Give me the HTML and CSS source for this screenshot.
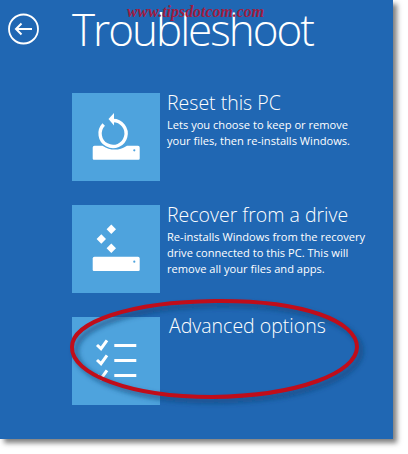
FILE: index.html
```html
<!DOCTYPE html>
<html lang="en">
<head>
<meta charset="utf-8">
<title>Troubleshoot</title>
<link rel="stylesheet" href="styles.css">
</head>
<body>
<main class="panel">
  <header class="top">
    <svg class="back" viewBox="0 0 32 32" aria-hidden="true">
      <circle cx="15.500" cy="16" r="14.500" fill="none" stroke="#fff" stroke-width="1.800"/>
      <path d="M24 16H8.500M13.500 10.500 8 16l5.500 5.500" fill="none" stroke="#fff" stroke-width="2"/>
    </svg>
    <h1 class="title">Troubleshoot</h1>
  </header>
  <section class="option">
    <div class="tile">
      <svg class="icon" viewBox="0 0 88 88" aria-hidden="true">
        <path d="M20.700 54.500Q20.700 52.700 22.500 52.700H30.500Q42.700 60.500 55 52.700H66Q67.700 52.700 67.700 54.500V65.500Q67.700 66.700 66.500 66.700H21.900Q20.700 66.700 20.700 65.500Z" fill="#fff"/>
        <circle cx="62.300" cy="57.300" r="1.100" fill="#4ea3dd"/>
        <path d="M41 27.500A13 13 0 1 1 31.700 31.500" fill="none" stroke="#fff" stroke-width="3.400"/>
        <path d="M42 20V32.500L36.500 26Z" fill="#fff"/>
      </svg>
    </div>
    <div class="copy">
      <h2 class="name">Reset this PC</h2>
      <p class="desc">Lets you choose to keep or remove your files, then re-installs Windows.</p>
    </div>
  </section>
  <section class="option">
    <div class="tile">
      <svg class="icon" viewBox="0 0 88 88" aria-hidden="true">
        <path d="M34.600 24.300 39.300 19.600 44 24.300 39.300 29ZM24.600 34 29.300 29.300 34 34 29.300 38.700ZM34.600 43.300 39.300 38.600 44 43.300 39.300 48Z" fill="#fff"/>
        <path d="M20.700 53.500Q20.700 51.700 22.500 51.700H66Q67.700 51.700 67.700 53.500V64.800Q67.700 66 66.500 66H21.900Q20.700 66 20.700 64.800Z" fill="#fff"/>
        <circle cx="62.300" cy="56.700" r="1.100" fill="#4ea3dd"/>
      </svg>
    </div>
    <div class="copy">
      <h2 class="name">Recover from a drive</h2>
      <p class="desc">Re-installs Windows from the recovery drive connected to this PC. This will remove all your files and apps.</p>
    </div>
  </section>
  <section class="option">
    <div class="tile">
      <svg class="icon" viewBox="0 0 88 88" aria-hidden="true">
        <path d="M25 28 29 31.700 35 23.300M25 43 29 46.700 35 38.300M25 58 29 61.700 35 53.300" fill="none" stroke="#fff" stroke-width="3"/>
        <path d="M42.300 28.500H64.300M42.300 43.500H64.300M42.300 58.500H64.300" fill="none" stroke="#fff" stroke-width="2.800"/>
      </svg>
    </div>
    <div class="copy copy-last">
      <h2 class="name">Advanced options</h2>
    </div>
  </section>
  <p class="watermark">www.tipsdotcom.com</p>
  <svg class="ring" viewBox="0 0 408 454" aria-hidden="true">
    <defs>
      <filter id="soft" x="-10%" y="-20%" width="120%" height="140%"><feGaussianBlur stdDeviation="2.500"/></filter>
    </defs>
    <path d="M76 351C76 326 134 306 219 305C309 304 361 326 361 351C361 376 304 400 216 401C134 401 75 378 76 351Z" fill="none" stroke="#123f6f" stroke-opacity=".6" stroke-width="5" filter="url(#soft)"/>
    <path d="M72 347C72 322 130 302 215 301C305 300 357 322 357 347C357 372 300 396 212 397C130 397 71 374 72 347Z" fill="none" stroke="#c00d1a" stroke-width="4"/>
  </svg>
</main>
</body>
</html>
```
FILE: styles.css
```css
* { box-sizing: border-box; }
html, body { margin: 0; padding: 0; }
body { width: 408px; height: 454px; background: #fff; overflow: hidden; font-family: "Open Sans", "Liberation Sans", sans-serif; }
.panel {
  position: relative;
  width: 393px;
  height: 439px;
  padding: 0 0 0 8px;
  background: #2067b3;
  color: #fff;
  box-shadow: 4px 4px 5px rgba(60, 60, 60, .65);
}
.top { display: flex; align-items: flex-start; height: 93px; }
.back { width: 32px; height: 32px; margin-top: 13px; flex: none; }
.title { margin: -1px 0 0 32px; font-size: 44px; line-height: 60px; font-weight: 300; letter-spacing: -2px; white-space: nowrap; }
.option { display: flex; gap: 7px; height: 88px; margin-bottom: 24px; margin-left: 64px; }
.tile { width: 88px; height: 88px; flex: none; background: #4ea3dd; }
.icon { display: block; width: 88px; height: 88px; }
.copy { width: 204px; margin-top: -2px; }
.copy-last { margin-left: 2px; margin-top: -3px; }
.name { margin: 0; font-size: 19.500px; line-height: 24px; font-weight: 300; white-space: nowrap; }
.desc { margin: 2px 0 0; font-size: 11.100px; line-height: 16px; font-weight: 400; }
.watermark {
  position: absolute;
  left: 127px;
  top: 3.500px;
  margin: 0;
  font-family: "Liberation Serif", serif;
  font-size: 15.900px;
  line-height: 16px;
  font-weight: 700;
  font-style: italic;
  color: #a01c40;
  white-space: nowrap;
}
.ring { position: absolute; left: 0; top: 0; width: 408px; height: 454px; pointer-events: none; }
```
